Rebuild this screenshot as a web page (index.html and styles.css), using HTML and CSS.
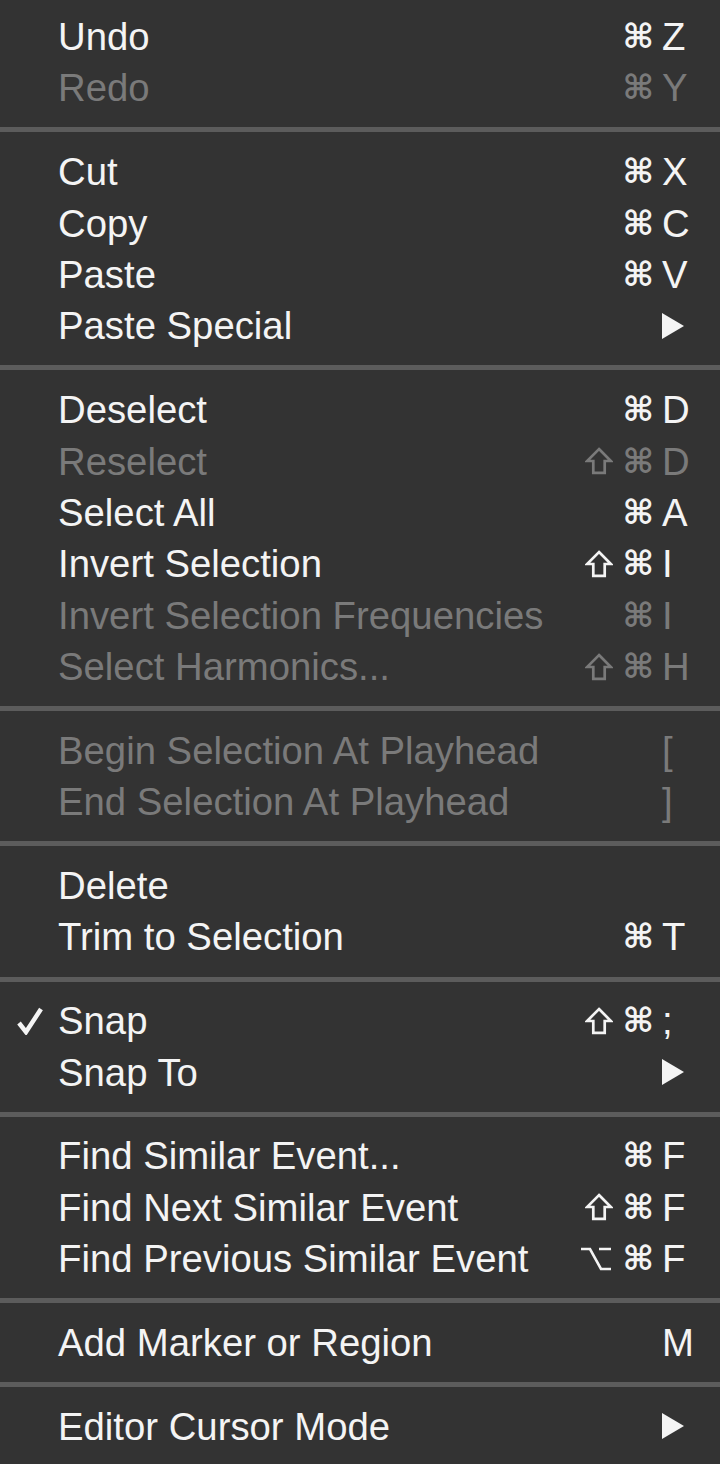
FILE: index.html
```html
<!DOCTYPE html>
<html lang="en">

<head>
  <meta charset="UTF-8">
  <meta name="viewport" content="width=device-width, initial-scale=1.0">
  <title>Edit</title>
  <link rel="stylesheet" href="styles.css">
</head>

<body>
  <svg width="0" height="0" class="defs">
    <symbol id="shift" viewBox="0 0 26 27"><path d="M13 2 L24.5 13.5 H18.5 V25 H7.5 V13.5 H1.5 Z"/></symbol>
    <symbol id="option" viewBox="0 0 32 26"><path d="M1 3 H10 L21 23 H31 M19 3 H31"/></symbol>
    <symbol id="submenu" viewBox="0 0 22 26"><path d="M0 0 L22 13 L0 26 Z"/></symbol>
  </svg>

  <div class="menu">
    <div class="item"><span class="check"></span><span class="label">Undo</span><span class="mods"><span class="cmd">⌘</span></span><span class="key">Z</span></div>
    <div class="item off"><span class="check"></span><span class="label">Redo</span><span class="mods"><span class="cmd">⌘</span></span><span class="key">Y</span></div>
    <div class="sep"></div>

    <div class="item"><span class="check"></span><span class="label">Cut</span><span class="mods"><span class="cmd">⌘</span></span><span class="key">X</span></div>
    <div class="item"><span class="check"></span><span class="label">Copy</span><span class="mods"><span class="cmd">⌘</span></span><span class="key">C</span></div>
    <div class="item"><span class="check"></span><span class="label">Paste</span><span class="mods"><span class="cmd">⌘</span></span><span class="key">V</span></div>
    <div class="item"><span class="check"></span><span class="label">Paste Special</span><span class="mods"></span><span class="key"><svg class="arrow"><use href="#submenu"/></svg></span></div>
    <div class="sep"></div>

    <div class="item"><span class="check"></span><span class="label">Deselect</span><span class="mods"><span class="cmd">⌘</span></span><span class="key">D</span></div>
    <div class="item off"><span class="check"></span><span class="label">Reselect</span><span class="mods"><svg class="shift"><use href="#shift"/></svg><span class="cmd">⌘</span></span><span class="key">D</span></div>
    <div class="item"><span class="check"></span><span class="label">Select All</span><span class="mods"><span class="cmd">⌘</span></span><span class="key">A</span></div>
    <div class="item"><span class="check"></span><span class="label">Invert Selection</span><span class="mods"><svg class="shift"><use href="#shift"/></svg><span class="cmd">⌘</span></span><span class="key">I</span></div>
    <div class="item off"><span class="check"></span><span class="label">Invert Selection Frequencies</span><span class="mods"><span class="cmd">⌘</span></span><span class="key">I</span></div>
    <div class="item off"><span class="check"></span><span class="label">Select Harmonics...</span><span class="mods"><svg class="shift"><use href="#shift"/></svg><span class="cmd">⌘</span></span><span class="key">H</span></div>
    <div class="sep"></div>

    <div class="item off"><span class="check"></span><span class="label">Begin Selection At Playhead</span><span class="mods"></span><span class="key">[</span></div>
    <div class="item off"><span class="check"></span><span class="label">End Selection At Playhead</span><span class="mods"></span><span class="key">]</span></div>
    <div class="sep"></div>

    <div class="item"><span class="check"></span><span class="label">Delete</span><span class="mods"></span><span class="key"></span></div>
    <div class="item"><span class="check"></span><span class="label">Trim to Selection</span><span class="mods"><span class="cmd">⌘</span></span><span class="key">T</span></div>
    <div class="sep"></div>

    <div class="item"><span class="check"><svg class="tick" viewBox="0 0 26 28"><path d="M2 16 L9 25 L24 2"/></svg></span><span class="label">Snap</span><span class="mods"><svg class="shift"><use href="#shift"/></svg><span class="cmd">⌘</span></span><span class="key">;</span></div>
    <div class="item"><span class="check"></span><span class="label">Snap To</span><span class="mods"></span><span class="key"><svg class="arrow"><use href="#submenu"/></svg></span></div>
    <div class="sep"></div>

    <div class="item"><span class="check"></span><span class="label">Find Similar Event...</span><span class="mods"><span class="cmd">⌘</span></span><span class="key">F</span></div>
    <div class="item"><span class="check"></span><span class="label">Find Next Similar Event</span><span class="mods"><svg class="shift"><use href="#shift"/></svg><span class="cmd">⌘</span></span><span class="key">F</span></div>
    <div class="item"><span class="check"></span><span class="label">Find Previous Similar Event</span><span class="mods"><svg class="option"><use href="#option"/></svg><span class="cmd">⌘</span></span><span class="key">F</span></div>
    <div class="sep"></div>

    <div class="item"><span class="check"></span><span class="label">Add Marker or Region</span><span class="mods"></span><span class="key">M</span></div>
    <div class="sep"></div>

    <div class="item"><span class="check"></span><span class="label">Editor Cursor Mode</span><span class="mods"></span><span class="key"><svg class="arrow"><use href="#submenu"/></svg></span></div>
  </div>
</body>

</html>
```

FILE: styles.css
```css
html,
body {
  margin: 0;
  background: #333333;
}

.defs {
  position: absolute;
}

.menu {
  --rowHeight: 51.4px;
  --textColor: #f4f4f4;
  --offColor: #7a7a7a;

  width: 720px;
  height: 1464px;
  overflow: hidden;
  padding-top: 11px;
  box-sizing: border-box;

  background: #333333;
  font-family: "Liberation Sans", Arial, sans-serif;
  font-size: 38.3px;
  color: var(--textColor);
}

.item {
  height: var(--rowHeight);
  display: flex;
  align-items: center;
}

.item.off {
  color: var(--offColor);
}

.check {
  width: 58px;
  flex: none;
  display: flex;
  justify-content: flex-end;
  padding-right: 15px;
  box-sizing: border-box;
}

.tick {
  width: 26px;
  height: 28px;
  fill: none;
  stroke: currentColor;
  stroke-width: 4.5;
}

.label {
  flex: 1;
  white-space: nowrap;
  line-height: var(--rowHeight);
}

.mods {
  flex: none;
  display: flex;
  align-items: center;
  justify-content: flex-end;
  gap: 9px;
  margin-right: 8px;
}

.cmd {
  font-family: "DejaVu Sans", sans-serif;
  font-size: 34px;
  line-height: var(--rowHeight);
  font-weight: bold;
}

.shift {
  width: 28px;
  height: 28px;
  fill: none;
  stroke: currentColor;
  stroke-width: 2.6;
  stroke-linejoin: miter;
}

.option {
  width: 34px;
  height: 26px;
  fill: none;
  stroke: currentColor;
  stroke-width: 2.6;
}

.key {
  width: 58px;
  flex: none;
  display: flex;
  align-items: center;
  line-height: var(--rowHeight);
}

.arrow {
  width: 22px;
  height: 26px;
  fill: currentColor;
}

.sep {
  height: 32.4px;
  display: flex;
  align-items: center;
}

.sep::before {
  content: "";
  flex: 1;
  height: 5px;
  background: #5c5c5c;
}
```
